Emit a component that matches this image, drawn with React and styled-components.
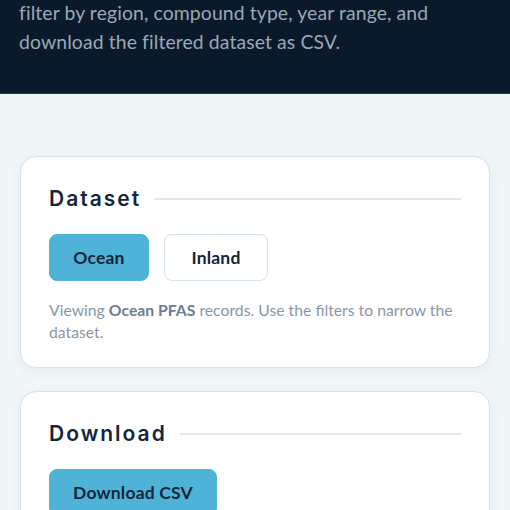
import React, { useState } from "react";
import styled, { createGlobalStyle } from "styled-components";

const Global = createGlobalStyle`
  html, body { margin: 0; padding: 0; background: #f1f6f9; }
  body { font-family: "Lato", "Noto Sans", sans-serif; }
  * { box-sizing: border-box; }
`;

const Page = styled.div`
  min-height: 510px;
  background: #f1f6f9;
`;

const Header = styled.header`
  background: #0b1a2b;
  padding: 0 19px;
  height: 94px;
  border-bottom: 1px solid #2a3b4d;
`;

const Lead = styled.p`
  margin: 0;
  transform: translateY(-2px);
  font-size: 19.4px;
  line-height: 29px;
  color: #9aa8b6;
  letter-spacing: 0.1px;
`;

const Main = styled.main`
  padding: 62px 20px 20px;
  display: flex;
  flex-direction: column;
  gap: 23px;
`;

const Card = styled.section`
  background: #ffffff;
  border: 1px solid #d5e3ea;
  border-radius: 16px;
  padding: 28px 28px 24px;
  box-shadow: 0 4px 14px rgba(20, 50, 80, 0.05);
`;

const HeadRow = styled.div`
  display: flex;
  align-items: center;
  gap: 13px;
  height: 28px;
`;

const Title = styled.h2`
  margin: 0;
  font-family: "Inter", sans-serif;
  font-weight: 600;
  font-size: 21px;
  line-height: 28px;
  color: #13263d;
  letter-spacing: 2px;
`;

const Rule = styled.div`
  flex: 1;
  height: 2px;
  background: #dde9ef;
`;

const Buttons = styled.div`
  display: flex;
  gap: 15px;
  margin-top: 21px;
`;

const Btn = styled.button`
  height: 47px;
  padding: 0 ${(p) => p.$px || 20}px;
  min-width: ${(p) => p.$w || 0}px;
  border-radius: 8px;
  border: 1px solid ${(p) => (p.$active ? "#4fb2d7" : "#d5e3ea")};
  background: ${(p) => (p.$active ? "#4fb2d7" : "#ffffff")};
  color: #14243a;
  font-family: "Lato", sans-serif;
  font-weight: 700;
  font-size: 17.5px;
  letter-spacing: 0.2px;
  cursor: pointer;
`;

const Note = styled.p`
  margin: 18px 0 0;
  font-size: 15.75px;
  line-height: 22px;
  color: #8797a7;
  b { color: #6c7d8e; font-weight: 700; }
`;

export default function App() {
  const [ds, setDs] = useState("Ocean");
  return (
    <Page>
      <Global />
      <Header>
        <Lead>
          filter by region, compound type, year range, and
          <br />
          download the filtered dataset as CSV.
        </Lead>
      </Header>
      <Main>
        <Card>
          <HeadRow>
            <Title>Dataset</Title>
            <Rule />
          </HeadRow>
          <Buttons>
            <Btn $w={100} $active={ds === "Ocean"} onClick={() => setDs("Ocean")}>Ocean</Btn>
            <Btn $w={104} $active={ds === "Inland"} onClick={() => setDs("Inland")}>Inland</Btn>
          </Buttons>
          <Note>
            Viewing <b>{ds} PFAS</b> records. Use the filters to narrow the dataset.
          </Note>
        </Card>
        <Card>
          <HeadRow>
            <Title>Download</Title>
            <Rule />
          </HeadRow>
          <Buttons>
            <Btn $w={168} $active>Download CSV</Btn>
          </Buttons>
        </Card>
      </Main>
    </Page>
  );
}
